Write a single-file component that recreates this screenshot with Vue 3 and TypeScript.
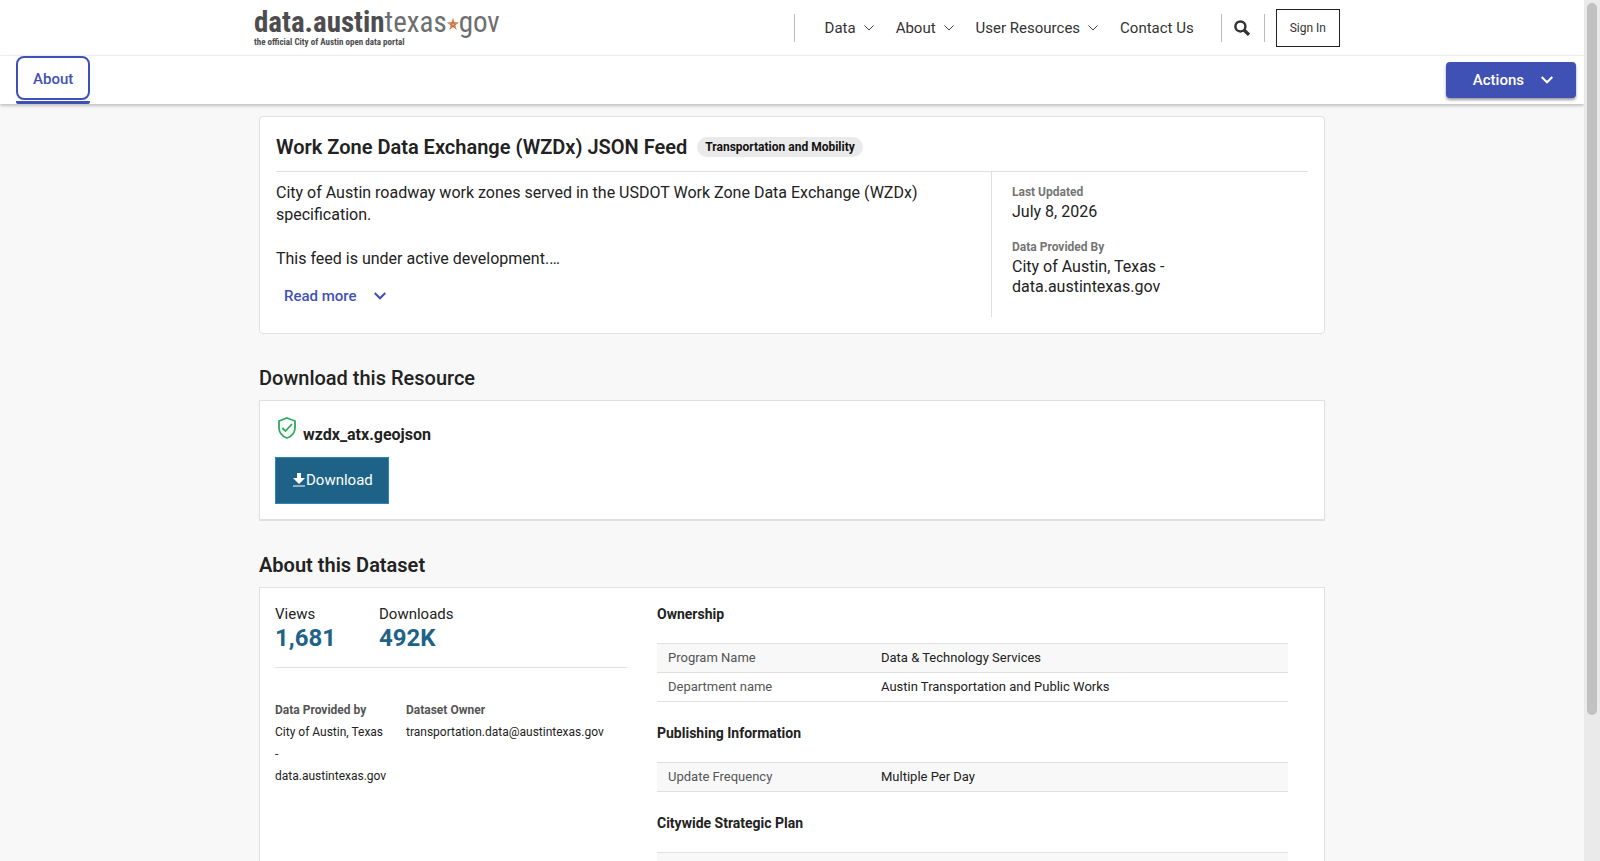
<script setup lang="ts">
interface NavItem {
  label: string
  menu: boolean
}
interface MetaRow {
  name: string
  value: string
}
interface MetaGroup {
  title: string
  rows: MetaRow[]
}

const navItems: NavItem[] = [
  { label: 'Data', menu: true },
  { label: 'About', menu: true },
  { label: 'User Resources', menu: true },
  { label: 'Contact Us', menu: false },
]

const groups: MetaGroup[] = [
  {
    title: 'Ownership',
    rows: [
      { name: 'Program Name', value: 'Data & Technology Services' },
      { name: 'Department name', value: 'Austin Transportation and Public Works' },
    ],
  },
  {
    title: 'Publishing Information',
    rows: [{ name: 'Update Frequency', value: 'Multiple Per Day' }],
  },
  {
    title: 'Citywide Strategic Plan',
    rows: [{ name: 'Strategic Area', value: 'Mobility & Critical Infrastructure' }],
  },
]
</script>

<template>
  <div class="window">
    <div class="page">
      <header class="site-header">
        <div class="header-inner">
          <a class="logo" href="#">
            <span class="logo-name">
              <b>data.austin</b><span>texas</span>
              <svg class="logo-star" viewBox="0 0 20 20" aria-hidden="true">
                <path d="M10 0 L12.3 7.2 L20 7.4 L13.8 12 L16.2 19.4 L10 15 L3.8 19.4 L6.2 12 L0 7.4 L7.7 7.2 Z" fill="#c4622f" />
                <path d="M10 11 V3 M10 11 L5 17 M10 11 L17 8.5 M10 11 L3 8.5 M10 11 L15 17" stroke="#f3d3bd" stroke-width="0.8" fill="none" />
              </svg>
              <span>gov</span>
            </span>
            <span class="logo-tag">the official City of Austin open data portal</span>
          </a>
          <nav class="nav">
            <a v-for="item in navItems" :key="item.label" class="nav-link" href="#">
              {{ item.label }}
              <svg v-if="item.menu" class="nav-caret" viewBox="0 0 10 6" aria-hidden="true">
                <path d="M0.5 0.5 L5 5 L9.5 0.5" fill="none" stroke="#444" stroke-width="1" />
              </svg>
            </a>
          </nav>
          <button class="search" type="button" aria-label="Search">
            <svg viewBox="0 0 16 16" aria-hidden="true">
              <circle cx="6.4" cy="6.4" r="5" fill="none" stroke="#333" stroke-width="2.5" />
              <path d="M10 10 L15 14.8" stroke="#333" stroke-width="3.4" />
            </svg>
          </button>
          <a class="sign-in" href="#">Sign In</a>
        </div>
      </header>

      <div class="toolbar">
        <button class="tab" type="button"><span class="tab-label">About</span></button>
        <button class="actions" type="button">
          Actions
          <svg class="chevron" viewBox="0 0 12 8" aria-hidden="true">
            <path d="M0.7 1 L6 6.3 L11.3 1" fill="none" stroke="currentColor" stroke-width="2" />
          </svg>
        </button>
      </div>

      <main class="content">
        <section class="card summary">
          <div class="title-row">
            <h1>Work Zone Data Exchange (WZDx) JSON Feed</h1>
            <span class="badge">Transportation and Mobility</span>
          </div>
          <div class="summary-body">
            <div class="description">
              <p>City of Austin roadway work zones served in the USDOT Work Zone Data Exchange (WZDx) specification.</p>
              <p>This feed is under active development.…</p>
              <button class="read-more" type="button">
                Read more
                <svg class="chevron" viewBox="0 0 12 8" aria-hidden="true">
                  <path d="M0.7 1 L6 6.3 L11.3 1" fill="none" stroke="currentColor" stroke-width="2" />
                </svg>
              </button>
            </div>
            <dl class="facts">
              <dt>Last Updated</dt>
              <dd>July 8, 2026</dd>
              <dt>Data Provided By</dt>
              <dd>City of Austin, Texas - data.austintexas.gov</dd>
            </dl>
          </div>
        </section>

        <h2 class="medium">Download this Resource</h2>
        <section class="card resource">
          <div class="file">
            <svg class="shield" viewBox="0 0 18 22" aria-hidden="true">
              <path d="M9 1 L17 4 V10.5 C17 15.5 13.8 19.3 9 21 C4.2 19.3 1 15.5 1 10.5 V4 Z" fill="none" stroke="#2bab5b" stroke-width="1.8" />
              <path d="M4.3 11 L7.5 14 L14 7" fill="none" stroke="#2bab5b" stroke-width="1.8" />
            </svg>
            <h3>wzdx_atx.geojson</h3>
          </div>
          <a class="download" href="#">
            <svg class="download-icon" viewBox="0 0 12 14" aria-hidden="true">
              <path d="M4 0 H8 V5 H12 L6 11 L0 5 H4 Z M0 12.5 H12 V13.5 H0 Z" fill="#fff" />
            </svg>Download</a>
        </section>

        <h2>About this Dataset</h2>
        <section class="card about">
          <div class="about-left">
            <dl class="stats">
              <div>
                <dt>Views</dt>
                <dd>1,681</dd>
              </div>
              <div>
                <dt>Downloads</dt>
                <dd>492K</dd>
              </div>
            </dl>
            <dl class="owners">
              <div class="provider">
                <dt>Data Provided by</dt>
                <dd>City of Austin, Texas - data.austintexas.gov</dd>
              </div>
              <div>
                <dt>Dataset Owner</dt>
                <dd>transportation.data@austintexas.gov</dd>
              </div>
            </dl>
          </div>
          <div class="about-right">
            <section v-for="group in groups" :key="group.title" class="group">
              <h3>{{ group.title }}</h3>
              <table>
                <tbody>
                  <tr v-for="row in group.rows" :key="row.name">
                    <th scope="row">{{ row.name }}</th>
                    <td>{{ row.value }}</td>
                  </tr>
                </tbody>
              </table>
            </section>
          </div>
        </section>
      </main>
    </div>
    <div class="scroll-track" aria-hidden="true"><div class="scroll-thumb"></div></div>
  </div>
</template>

<style>
body {
  margin: 0;
  overflow: hidden;
}
</style>

<style scoped>
.window {
  display: flex;
  height: 100vh;
  overflow: hidden;
  background: #f8f8f8;
  color: #222;
  font-family: Roboto, "Liberation Sans", sans-serif;
  font-size: 16px;
}
.window * {
  box-sizing: border-box;
}
.page {
  flex: 1;
  min-width: 0;
  overflow: hidden;
}
.scroll-track {
  width: 16px;
  padding: 3px;
  background: #eaeaea;
}
.scroll-thumb {
  height: 83.3%;
  border-radius: 5px;
  background: #c1c1c1;
}
h1, h2, h3, p, dl, dd {
  margin: 0;
}
button {
  padding: 0;
  border: 0;
  background: none;
  font: inherit;
  cursor: pointer;
}
a {
  color: inherit;
  text-decoration: none;
}

.site-header {
  background: #fff;
  border-bottom: 1px solid #f0f0f0;
}
.header-inner {
  display: flex;
  align-items: center;
  max-width: 1096px;
  height: 55px;
  margin: 0 auto;
  padding-left: 10px;
}
.logo {
  display: flex;
  flex-direction: column;
  gap: 2px;
  margin-right: auto;
  color: #4d4d4f;
  font-family: "Liberation Sans Narrow", "Roboto Condensed", "DejaVu Sans Condensed", sans-serif;
}
.logo-name {
  display: flex;
  align-items: center;
  font-size: 29px;
  line-height: 28px;
}
.logo-name > span {
  color: #6d6e70;
}
.logo-star {
  width: 12px;
  height: 12px;
  margin-top: 4px;
}
.logo-tag {
  font-size: 9px;
  line-height: 9px;
  font-weight: 700;
}
.nav {
  display: flex;
  align-items: center;
  gap: 22px;
  height: 28px;
  padding: 0 27px 0 30px;
  border-left: 1px solid #bbb;
  border-right: 1px solid #bbb;
  font-size: 15px;
  color: #333;
}
.nav-link {
  display: flex;
  align-items: center;
  gap: 8px;
}
.nav-caret {
  width: 10px;
  height: 6px;
}
.search {
  display: flex;
  align-items: center;
  justify-content: center;
  width: 43px;
  height: 28px;
  padding-right: 2px;
  border-right: 1px solid #bbb;
}
.search svg {
  width: 16px;
  height: 16px;
}
.sign-in {
  margin-left: 11px;
  padding: 0 13px;
  border: 1px solid #222;
  color: #333;
  font-size: 12px;
  line-height: 36px;
}

.toolbar {
  position: relative;
  display: flex;
  align-items: center;
  justify-content: space-between;
  height: 48px;
  padding: 0 8px 0 16px;
  background: #fff;
  box-shadow: 0 2px 3px rgba(0, 0, 0, 0.22);
}
.tab {
  display: flex;
  align-items: flex-start;
  align-self: stretch;
  border-bottom: 3px solid #3f51b5;
  border-radius: 0 0 2px 2px;
  color: #3f51b5;
  font-size: 15px;
  font-weight: 500;
}
.tab-label {
  display: block;
  padding: 2px 15px 0;
  border: 2px solid #3f51b5;
  border-radius: 8px;
  line-height: 38px;
}
.actions {
  display: flex;
  align-items: center;
  gap: 17px;
  height: 36px;
  padding: 0 23px 0 27px;
  border-radius: 4px;
  background: #3f51b5;
  box-shadow: 0 2px 3px rgba(0, 0, 0, 0.4);
  color: #fff;
  font-size: 15px;
  font-weight: 500;
}
.chevron {
  width: 12px;
  height: 8px;
}

.content {
  max-width: 1066px;
  margin: 12px auto 0;
}
.card {
  border: 1px solid #e0e0e0;
  background: #fff;
}
.summary {
  padding: 0 16px 16px;
  border-radius: 4px;
}
.title-row {
  display: flex;
  align-items: center;
  gap: 10px;
  height: 55px;
  padding-top: 6px;
  border-bottom: 1px solid #e0e0e0;
}
h1 {
  font-size: 20px;
  font-weight: 600;
}
.badge {
  padding: 0 8px;
  border-radius: 10px;
  background: #eaeaea;
  color: #111;
  font-size: 12px;
  line-height: 20px;
  font-weight: 700;
}
.summary-body {
  display: flex;
}
.description {
  flex: 1;
  padding-top: 10px;
  font-size: 16px;
  line-height: 22px;
}
.description p {
  max-width: 680px;
  margin-bottom: 22px;
}
.read-more {
  display: flex;
  align-items: center;
  gap: 17px;
  margin-top: -7px;
  padding-left: 8px;
  color: #3f51b5;
  font-size: 15px;
  font-weight: 500;
}
.facts {
  width: 317px;
  min-height: 145px;
  padding: 10px 120px 0 20px;
  border-left: 1px solid #e0e0e0;
}
.facts dt {
  color: #757575;
  font-size: 12px;
  line-height: 20px;
  font-weight: 700;
}
.facts dd {
  margin-bottom: 15px;
  font-size: 16px;
  line-height: 20px;
}

h2 {
  margin: 32px 0 10px;
  font-size: 20px;
  line-height: 24px;
  font-weight: 600;
}
h2.medium {
  font-weight: 500;
}
.resource {
  padding: 16px 15px 15px;
  border-bottom-width: 2px;
}
.file {
  display: flex;
  gap: 7px;
  padding-left: 3px;
}
.shield {
  width: 18px;
  height: 22px;
}
.file h3 {
  padding-top: 8px;
  font-size: 16px;
  line-height: 20px;
}
.download {
  display: inline-flex;
  align-items: center;
  gap: 1px;
  height: 47px;
  margin-top: 12px;
  padding: 0 15px 1px 17px;
  border: 1px solid #2a87b8;
  background: #1e6387;
  color: #fff;
  font-size: 15px;
  vertical-align: top;
}
.download-icon {
  width: 12px;
  height: 14px;
}

.about {
  display: flex;
  gap: 30px;
  padding: 15px 36px 15px 15px;
}
.about-left {
  width: 352px;
}
.stats {
  display: flex;
  gap: 43px;
  padding-bottom: 16px;
  border-bottom: 1px solid #e0e0e0;
}
.stats dt {
  font-size: 15px;
  line-height: 22px;
}
.stats dd {
  color: #1e6387;
  font-size: 24px;
  line-height: 26px;
  font-weight: 700;
}
.owners {
  display: flex;
  gap: 18px;
  padding-top: 31px;
  font-size: 12px;
  line-height: 22px;
}
.owners dt {
  color: #555;
  font-weight: 700;
}
.provider {
  width: 113px;
}
.about-right {
  flex: 1;
}
.group h3 {
  font-size: 14px;
  line-height: 22px;
  font-weight: 700;
}
.group table {
  width: 100%;
  margin: 18px 0 20px;
  border-collapse: collapse;
  table-layout: fixed;
  font-size: 13px;
  line-height: 18px;
}
.group tr {
  border-top: 1px solid #e0e0e0;
  border-bottom: 1px solid #e0e0e0;
}
.group tr:nth-child(odd) {
  background: #f8f8f8;
}
.group th,
.group td {
  padding: 5px 11px;
  text-align: left;
}
.group th {
  width: 213px;
  color: #555;
  font-weight: 400;
}
</style>
